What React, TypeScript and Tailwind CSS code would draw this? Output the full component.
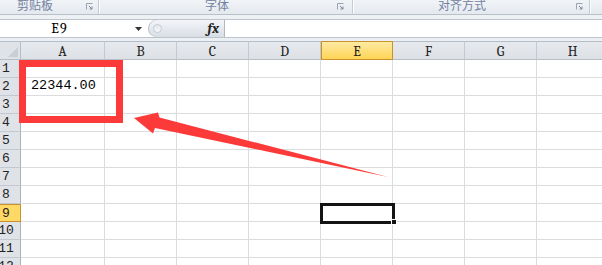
import React from "react";

const COLS = ["A", "B", "C", "D", "E", "F", "G", "H"];
const ROWS = [1, 2, 3, 4, 5, 6, 7, 8, 9, 10, 11, 12];

function Launcher() {
  return (
    <svg width="7" height="7" viewBox="0 0 7 7" className="mt-[3px]">
      <path d="M0.5 6.5V0.5H6.5" fill="none" stroke="#9aa4b0" strokeWidth="1" />
      <path d="M3 3L6 6M6 3.5V6H3.5" fill="none" stroke="#7d8794" strokeWidth="1" />
    </svg>
  );
}

function GroupSep() {
  return (
    <div className="flex h-full">
      <div className="w-px bg-[#c4ccd6]" />
      <div className="w-px bg-[#fbfcfd]" />
    </div>
  );
}

export default function App() {
  return (
    <div className="relative h-[265px] w-[602px] overflow-hidden bg-white">
      {/* Ribbon group labels (cut at top, as in the screenshot) */}
      <div className="flex h-[15px] overflow-hidden border-b border-[#b7c0cb] bg-gradient-to-b from-[#f1f4f7] to-[#e4e9ef] font-['Noto_Sans_CJK_SC'] text-[12px] leading-[12px] text-[#7282a0]">
        <div className="flex w-[98px] justify-between pl-[17px] pr-[5px]">
          <span className="-mt-[1px] block">剪贴板</span>
          <Launcher />
        </div>
        <GroupSep />
        <div className="flex w-[252px] justify-between pl-[105px] pr-[8px]">
          <span className="-mt-[1px] block">字体</span>
          <Launcher />
        </div>
        <GroupSep />
        <div className="flex w-[235px] justify-between pl-[84px] pr-[6px]">
          <span className="-mt-[1px] block">对齐方式</span>
          <Launcher />
        </div>
        <GroupSep />
        <div className="flex-1" />
      </div>

      {/* gap */}
      <div className="h-[4px] bg-[#eef1f4]" />

      {/* Formula bar */}
      <div className="flex h-[19px] border-y border-[#bcc4ce] bg-white">
        <div className="w-[119px] text-center font-serif text-[14px] leading-[17px] tracking-[1px] text-black">
          E9
        </div>
        <div className="flex w-[29px] items-center pl-[16px]">
          <svg width="8" height="4" viewBox="0 0 8 4">
            <path d="M0 0H7L3.5 4Z" fill="#333" />
          </svg>
        </div>
        <div className="flex w-[77px] items-center rounded-l-full border-r border-[#aeb7c2] bg-gradient-to-b from-[#f3f5f8] to-[#d9dee5] pl-[5px] pr-[5px] shadow-[inset_1px_0_0_#b9c1cb]">
          <div className="h-[9px] w-[9px] rounded-full border border-[#c4cbd3] bg-gradient-to-b from-[#e4e8ed] to-[#f5f7f9]" />
          <div className="flex-1" />
          <span className="font-serif text-[14px] font-bold italic leading-[17px] text-[#222]">
            fx
          </span>
        </div>
        <div className="flex-1 bg-white" />
      </div>

      {/* gap */}
      <div className="h-[3px] bg-[#eceff3]" />

      {/* Sheet grid */}
      <div className="grid grid-cols-[21px_84px_repeat(7,72px)] font-mono text-[13px] text-[#222]">
        {/* header row */}
        <div className="relative h-[19px] border-y border-r border-y-[#b5bdc7] border-r-[#b5bdc7] bg-[#dfe3e8]">
          <svg width="10" height="10" viewBox="0 0 10 10" className="absolute bottom-[2px] right-[2px]">
            <path d="M10 0V10H0Z" fill="#c9ced5" />
          </svg>
        </div>
        {COLS.map((c) => (
          <div
            key={c}
            className={
              c === "E"
                ? "flex h-[19px] items-center justify-center border border-[#c8922e] bg-gradient-to-b from-[#feeaa0] to-[#ffd452] pt-[2px] font-serif text-[14px]"
                : "flex h-[19px] items-center justify-center border-y border-r border-y-[#b5bdc7] border-r-[#c3c9d1] bg-gradient-to-b from-[#e6e9ed] to-[#dde1e6] pt-[2px] font-serif text-[14px]"
            }
          >
            {c}
          </div>
        ))}

        {ROWS.map((r) => (
          <React.Fragment key={r}>
            <div
              className={
                r === 9
                  ? "flex h-[18px] items-center overflow-hidden border-y border-r border-[#c8922e] bg-[#ffd965] pt-[1px]"
                  : "flex h-[18px] items-center overflow-hidden border-b border-r border-b-[#c3c9d1] border-r-[#a7b0bb] bg-[#dfe3e8] pt-[1px]"
              }
            >
              <span className="-ml-[2px] w-[16px] text-center">{r}</span>
            </div>
            {COLS.map((c) => (
              <div
                key={c}
                className="flex h-[18px] items-center border-b border-r border-[#dadcde] pl-[10px] text-[13.5px] text-black"
              >
                {r === 2 && c === "A" ? "22344.00" : ""}
              </div>
            ))}
          </React.Fragment>
        ))}
      </div>

      {/* Active cell E9 */}
      <div className="absolute left-[320px] top-[203px] h-[21px] w-[75px] border-[3px] border-[#141414]" />
      <div className="absolute left-[391px] top-[219px] h-[6px] w-[6px] border border-white bg-[#141414]" />

      {/* Red annotation box */}
      <div className="absolute left-[19px] top-[60px] h-[63px] w-[104px] border-[7px] border-[#fc3a3a]" />

      {/* Red arrow */}
      <svg className="absolute left-0 top-0" width="602" height="265" viewBox="0 0 602 265">
        <polygon
          points="134,118 158,112.5 159.5,117.5 388,177 155,128 153,133.5"
          fill="#fc3a3a"
        />
      </svg>
    </div>
  );
}
